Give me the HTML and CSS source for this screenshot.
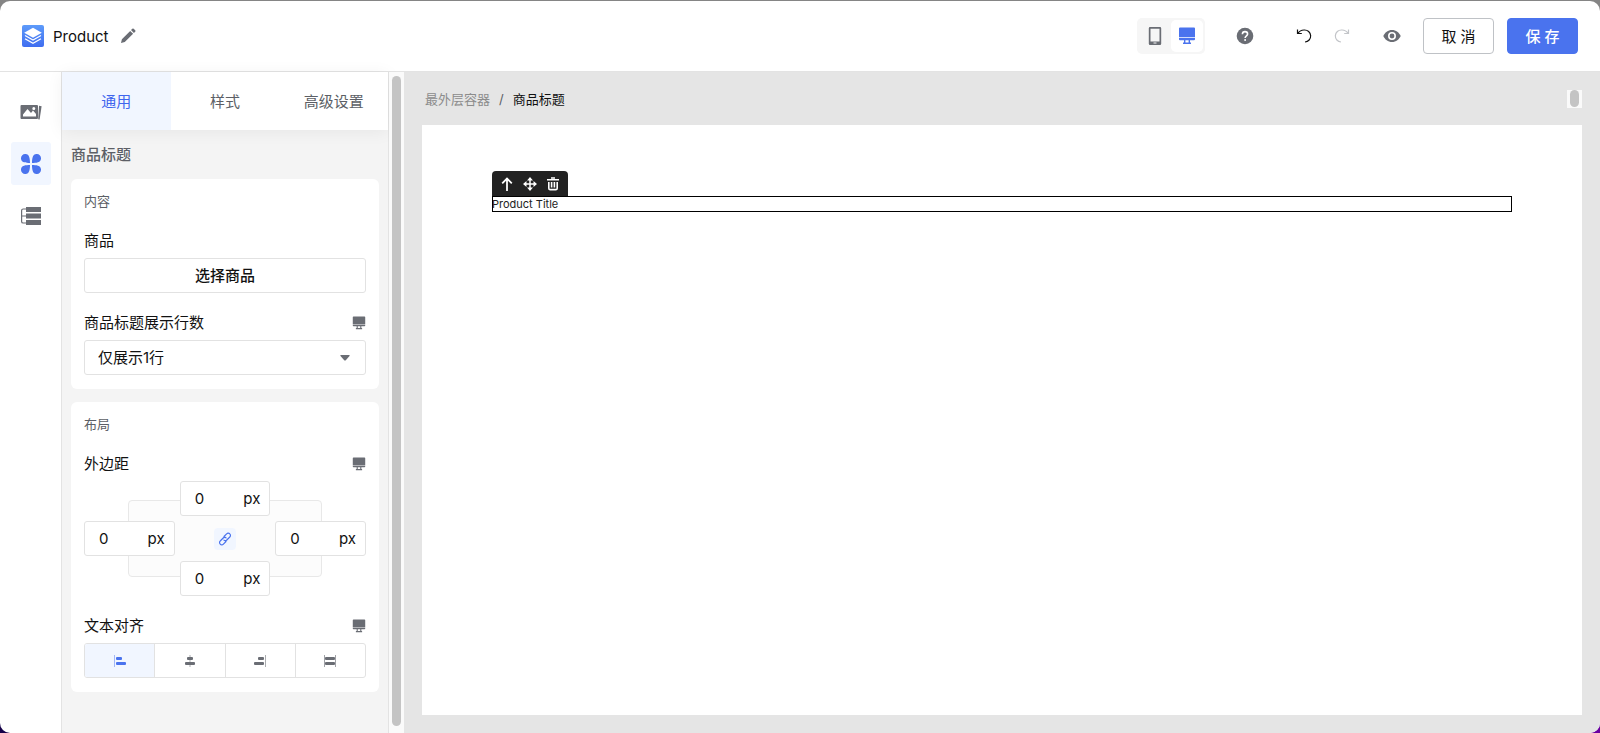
FILE: index.html
```html
<!DOCTYPE html>
<html lang="zh-CN">
<head>
    <meta charset="UTF-8">
    <meta name="viewport" content="width=device-width, initial-scale=1.0">
    <title>Product</title>
    <link rel="stylesheet" href="styles.css">
</head>
<body>
    <svg class="sprite" aria-hidden="true">
        <symbol id="monitor" viewBox="0 0 18 18">
            <path fill="currentColor" d="M2 .5h14a1 1 0 0 1 1 1v8.800H1V1.500a1 1 0 0 1 1-1z"/>
            <path fill="currentColor" fill-rule="evenodd" d="M1 11h16v1.300a1 1 0 0 1-1 1h-4v2.200h1V17H5v-1.500h1v-2.200H2a1 1 0 0 1-1-1zM7.400 13.300v2.200h3.200v-2.200z"/>
        </symbol>
    </svg>
    <div class="app">
        <header class="header">
            <div class="brand">
                <svg class="logo" width="22" height="22" viewBox="0 0 22 22">
                    <defs><linearGradient id="logo-bg" x1="0" y1="0" x2="0" y2="1"><stop offset="0" stop-color="#5d9bfa"/><stop offset="1" stop-color="#3f6df0"/></linearGradient></defs>
                    <rect width="22" height="22" rx="2" fill="url(#logo-bg)"/>
                    <path fill="#fff" d="M11 2.800l8.800 5L11 12.800 2.200 7.800z"/>
                    <path fill="none" stroke="#fff" stroke-width="1.300" d="M3 10.500l8 4.500 8-4.500M3 13.700l8 4.500 8-4.500"/>
                </svg>
                <span class="brand-name">Product</span>
                <button class="icon-btn edit" aria-label="编辑名称">
                    <svg width="16" height="16" viewBox="0 0 16 16"><path fill="currentColor" d="M1 15l.9-3.800 8.300-8.300 2.900 2.900-8.300 8.300zM11 2.100l1.300-1.300a1 1 0 0 1 1.400 0l1.500 1.500a1 1 0 0 1 0 1.400L13.900 5z"/></svg>
                </button>
            </div>
            <div class="tools">
                <div class="devices">
                    <button class="device" aria-label="手机">
                        <svg width="14" height="20" viewBox="0 0 14 20"><path fill="currentColor" fill-rule="evenodd" d="M2 1h10a1.200 1.200 0 0 1 1.200 1.200v15.600A1.200 1.200 0 0 1 12 19H2a1.200 1.200 0 0 1-1.200-1.200V2.200A1.200 1.200 0 0 1 2 1zm.5 1.800v12.600h9V2.800zM5.500 16.500v1h3v-1z"/></svg>
                    </button>
                    <button class="device active" aria-label="桌面">
                        <svg width="18" height="18"><use href="#monitor"/></svg>
                    </button>
                </div>
                <button class="icon-btn help" aria-label="帮助">
                    <svg width="18" height="18" viewBox="0 0 18 18"><circle cx="9" cy="9" r="8.300" fill="currentColor"/><path fill="none" stroke="#fff" stroke-width="1.600" d="M6.400 7.200C6.400 5.600 7.500 4.600 9 4.600s2.600 1 2.600 2.400c0 1.700-2.500 1.900-2.500 4"/><circle cx="9.100" cy="13.100" r="1" fill="#fff"/></svg>
                </button>
                <button class="icon-btn undo" aria-label="撤销">
                    <svg width="16" height="16" viewBox="0 0 16 16" fill="none" stroke="currentColor" stroke-width="1.200"><path d="M1.500 1.500v4h4.300M2 5.300C3.300 3.200 5.600 1.900 8.300 2a6 6 0 0 1 .7 12"/></svg>
                </button>
                <button class="icon-btn redo" aria-label="重做" disabled>
                    <svg width="16" height="16" viewBox="0 0 16 16" fill="none" stroke="currentColor" stroke-width="1.200"><path d="M14.500 1.500v4h-4.300M14 5.300C12.700 3.200 10.400 1.900 7.700 2A6 6 0 0 0 7 14"/></svg>
                </button>
                <button class="icon-btn preview" aria-label="预览">
                    <svg width="18" height="14" viewBox="0 0 18 14"><path fill="currentColor" d="M9 1c4 0 7.200 2.600 8.700 6-1.500 3.400-4.700 6-8.700 6S1.800 10.400.3 7C1.800 3.600 5 1 9 1z"/><circle cx="9" cy="7" r="3.200" fill="none" stroke="#fff" stroke-width="1.600"/></svg>
                </button>
                <button class="btn">取 消</button>
                <button class="btn primary">保 存</button>
            </div>
        </header>

        <div class="body">
            <nav class="rail">
                <button class="rail-item" aria-label="媒体">
                    <svg width="24" height="20" viewBox="0 0 24 20"><path fill="currentColor" fill-rule="evenodd" d="M2.500 3H18a1 1 0 0 1 1 1v12a1 1 0 0 1-1 1H2.500a1 1 0 0 1-1-1V4a1 1 0 0 1 1-1zM4 14.500h13v-2.500L14 8.500l-2 2.500-3.500-4L4 12.500zM14.800 5a1.500 1.500 0 1 0 0 3 1.500 1.500 0 0 0 0-3z"/><path fill="currentColor" d="M20 3.800l2.600.5-2 13.200-1.400-.3z"/></svg>
                </button>
                <button class="rail-item active" aria-label="组件">
                    <svg width="20" height="20" viewBox="0 0 20 20" fill="currentColor"><path id="petal" d="M9 9C5 9 0 8.500 0 4.500A4.300 4.300 0 0 1 4.500 0C8.500 0 9 5 9 9z"/><use href="#petal" transform="rotate(90 10 10)"/><use href="#petal" transform="rotate(180 10 10)"/><use href="#petal" transform="rotate(270 10 10)"/></svg>
                </button>
                <button class="rail-item" aria-label="图层">
                    <svg width="20" height="18" viewBox="0 0 20 18"><path fill="currentColor" d="M5 0h15v5H5zM5 6.500h15v5H5zM5 13h15v5H5z"/><path fill="none" stroke="currentColor" stroke-width="1.200" d="M5 2H2.200Q.6 2 .6 3.600v10.800Q.6 16 2.200 16H5M.6 9H5"/></svg>
                </button>
            </nav>

            <aside class="panel">
                <div class="tabs" role="tablist">
                    <button class="tab active" role="tab" aria-selected="true">通用</button>
                    <button class="tab" role="tab" aria-selected="false">样式</button>
                    <button class="tab" role="tab" aria-selected="false">高级设置</button>
                </div>
                <div class="panel-body">
                    <h2 class="panel-title">商品标题</h2>

                    <section class="card">
                        <h3 class="card-title">内容</h3>
                        <div class="field">
                            <div class="field-label">商品</div>
                            <button class="choose">选择商品</button>
                        </div>
                        <div class="field">
                            <div class="field-label">
                                <label for="lines">商品标题展示行数</label>
                                <svg width="14" height="14"><use href="#monitor"/></svg>
                            </div>
                            <div class="select-wrap">
                                <select id="lines" class="select"><option>仅展示1行</option></select>
                                <svg class="arrow" width="10" height="6" viewBox="0 0 10 6"><path fill="currentColor" d="M.8 0h8.400q.8.200.3.900L5.800 5.200Q5 6 4.200 5.200L.5.900Q0 .2.800 0z"/></svg>
                            </div>
                        </div>
                    </section>

                    <section class="card">
                        <h3 class="card-title">布局</h3>
                        <div class="field">
                            <div class="field-label">
                                外边距
                                <svg width="14" height="14"><use href="#monitor"/></svg>
                            </div>
                            <div class="spacing">
                                <div class="spacing-frame"></div>
                                <label class="unit top"><input type="text" value="0" aria-label="上边距"><span>px</span></label>
                                <label class="unit left"><input type="text" value="0" aria-label="左边距"><span>px</span></label>
                                <button class="link" aria-label="关联边距">
                                    <svg width="14" height="14" viewBox="0 0 14 14" fill="none" stroke="currentColor" stroke-width="1.200" stroke-linecap="round"><path d="M6 4.500l2.600-2.600a2.100 2.100 0 0 1 3.200 0 2.100 2.100 0 0 1 0 3.100L8.800 8a2.100 2.100 0 0 1-2.900.1M8 9.500l-2.600 2.600a2.100 2.100 0 0 1-3.200 0 2.100 2.100 0 0 1 0-3.100L5.200 6a2.100 2.100 0 0 1 2.900-.1"/></svg>
                                </button>
                                <label class="unit right"><input type="text" value="0" aria-label="右边距"><span>px</span></label>
                                <label class="unit bottom"><input type="text" value="0" aria-label="下边距"><span>px</span></label>
                            </div>
                        </div>
                        <div class="field">
                            <div class="field-label">
                                文本对齐
                                <svg width="14" height="14"><use href="#monitor"/></svg>
                            </div>
                            <div class="segments">
                                <button class="segment active" aria-label="左对齐">
                                    <svg width="12" height="12" viewBox="0 0 12 12" fill="currentColor"><path d="M0 0h.8v12H0z" opacity=".6"/><rect x="2" y="2" width="6" height="3" rx="1"/><rect x="2" y="7" width="10" height="3" rx="1"/></svg>
                                </button>
                                <button class="segment" aria-label="居中">
                                    <svg width="12" height="12" viewBox="0 0 12 12" fill="currentColor"><path d="M5.600 0h.8v12h-.8z" opacity=".7"/><rect x="3" y="2" width="6" height="3" rx="1"/><rect x="1" y="7" width="10" height="3" rx="1"/></svg>
                                </button>
                                <button class="segment" aria-label="右对齐">
                                    <svg width="12" height="12" viewBox="0 0 12 12" fill="currentColor"><path d="M11.200 0h.8v12h-.8z" opacity=".7"/><rect x="4" y="2" width="6" height="3" rx="1"/><rect x="0" y="7" width="10" height="3" rx="1"/></svg>
                                </button>
                                <button class="segment" aria-label="两端对齐">
                                    <svg width="12" height="12" viewBox="0 0 12 12" fill="currentColor"><path d="M0 0h.8v12H0zM11.200 0h.8v12h-.8z" opacity=".8"/><rect x="1" y="2" width="10" height="3" rx="1"/><rect x="1" y="7" width="10" height="3" rx="1"/></svg>
                                </button>
                            </div>
                        </div>
                    </section>
                </div>
            </aside>
            <div class="scrollbar"><div class="thumb"></div></div>

            <main class="stage">
                <div class="stage-bar">
                    <nav class="crumbs">
                        <a href="#">最外层容器</a>
                        <span class="slash">/</span>
                        <span class="current">商品标题</span>
                    </nav>
                    <div class="mini-scroll"><div class="thumb"></div></div>
                </div>
                <div class="canvas">
                    <div class="element-tools">
                        <button aria-label="选择父级"><svg width="14" height="14" viewBox="0 0 14 14" fill="none" stroke="currentColor" stroke-width="1.800"><path d="M7 14V1.500M2.200 6.300L7 1.500l4.800 4.800"/></svg></button>
                        <button aria-label="移动"><svg width="14" height="14" viewBox="0 0 14 14"><path stroke="currentColor" stroke-width="1.500" d="M7 2v10M2 7h10"/><path fill="currentColor" d="M7 0l3 3.500H4zM7 14l3-3.500H4zM0 7l3.500-3v6zM14 7l-3.500-3v6z"/></svg></button>
                        <button aria-label="删除"><svg width="14" height="14" viewBox="0 0 14 14" fill="none" stroke="currentColor" stroke-width="1.600"><path d="M1 2.800h12M5 1h4M2.800 5v6.200q0 1.400 1.400 1.400h5.600q1.400 0 1.400-1.400V5M5.600 5v5.500M8.400 5v5.500"/></svg></button>
                    </div>
                    <div class="element">Product Title</div>
                </div>
            </main>
        </div>
    </div>
</body>
</html>
```

FILE: styles.css
```css
* { box-sizing: border-box; }
body { margin: 0; height: 100vh; padding-top: 1px; overflow: hidden; background: linear-gradient(to right, #150048, #6a00a0); font-family: Inter, "Noto Sans CJK SC", sans-serif; font-size: 15px; color: #111; }
body::before { content: ""; position: absolute; z-index: -1; top: 0; left: 0; right: 0; height: 20px; background: #858585; }
button, input, select { margin: 0; padding: 0; border: 0; background: none; font: inherit; color: inherit; }
button { display: flex; align-items: center; justify-content: center; cursor: pointer; }
h2, h3 { margin: 0; }
svg { flex: none; display: block; }
.sprite { position: absolute; width: 0; height: 0; }

.app { display: flex; flex-direction: column; height: 100%; border-radius: 10px; overflow: hidden; background: #fff; }

/* header */
.header { display: flex; align-items: center; justify-content: space-between; height: 71px; padding: 0 22px; border-bottom: 1px solid #e3e3e3; flex: none; }
.brand { display: flex; align-items: center; }
.brand-name { margin: 0 11px 0 9px; }
.icon-btn { color: #6a6d74; }
.tools { display: flex; align-items: center; }
.devices { display: flex; align-items: center; height: 36px; padding: 2px; border-radius: 5px; background: #f6f6f6; margin-right: 31px; }
.device { width: 32px; height: 32px; border-radius: 5px; color: #6a6d74; }
.device.active { background: #fff; color: #4a73ee; }
.help { margin-right: 42px; }
.undo { margin-right: 22px; color: #111; }
.redo { margin-right: 33px; color: #c3c5c9; }
.preview { margin-right: 22px; }
.btn { width: 71px; height: 36px; padding-bottom: 2px; border: 1px solid #bfc2c6; border-radius: 4px; }
.btn.primary { margin-left: 13px; border-color: #4a73ee; background: #4a73ee; color: #fff; font-weight: 500; }

.body { display: flex; flex: 1; min-height: 0; }

/* left rail */
.rail { display: flex; flex-direction: column; align-items: center; gap: 9px; width: 62px; padding-top: 18px; border-right: 1px solid #e3e3e3; flex: none; }
.rail-item { width: 40px; height: 43px; border-radius: 3px; color: #6a6d74; }
.rail-item.active { background: #f1f6ff; color: #4a73ee; }

/* settings panel */
.panel { width: 327px; border-right: 1px solid #e3e3e3; background: #f4f4f4; flex: none; }
.tabs { display: flex; height: 58px; background: #fff; box-shadow: 0 2px 16px rgba(0, 0, 0, 0.06); }
.tab { flex: 1 1 0; padding-bottom: 2px; color: #5c5f66; }
.tab.active { background: #f1f6ff; color: #3f66ee; }
.panel-body { display: flex; flex-direction: column; gap: 13px; padding: 13px 9px; }
.panel-title { font-size: 15px; line-height: 23px; font-weight: 500; color: #5c5f66; }
.card { display: flex; flex-direction: column; gap: 19px; padding: 13px 13px 14px; border-radius: 6px; background: #fff; }
.card-title { font-size: 13px; line-height: 18px; padding-bottom: 1px; font-weight: 400; color: #5c5f66; }
.field { display: flex; flex-direction: column; gap: 6px; }
.field-label { display: flex; align-items: center; justify-content: space-between; height: 22px; line-height: 22px; }
.field-label svg { color: #6a6d74; }
.choose, .select, .unit { width: 100%; height: 35px; border: 1px solid #e2e2e2; border-radius: 3px; background: #fff; }
.choose { padding-bottom: 2px; font-weight: 500; }
.select-wrap { position: relative; }
.select { display: block; padding: 0 13px; appearance: none; }
.arrow { position: absolute; right: 16px; top: 15px; color: #6a6d74; pointer-events: none; }

/* margin editor */
.spacing { display: grid; grid-template-columns: repeat(3, 1fr); grid-template-rows: repeat(3, 35px); gap: 5px; }
.spacing-frame { grid-area: 1 / 1 / 4 / 4; margin: 19px 44px; border: 1px solid #e8e8e8; border-radius: 4px; background: #fcfcfc; }
.unit { display: flex; align-items: center; justify-content: space-between; padding: 0 9px 0 14px; }
.unit input { width: 36px; }
.top { grid-area: 1 / 2; }
.left { grid-area: 2 / 1; }
.right { grid-area: 2 / 3; }
.bottom { grid-area: 3 / 2; }
.link { grid-area: 2 / 2; place-self: center; width: 22px; height: 22px; border-radius: 4px; background: #f1f6ff; color: #4a73ee; }

.segments { display: flex; height: 35px; border: 1px solid #e2e2e2; border-radius: 3px; overflow: hidden; }
.segment { flex: 1; color: #6a6d74; }
.segment + .segment { border-left: 1px solid #e2e2e2; }
.segment.active { background: #f1f6ff; color: #4a73ee; }

.scrollbar { width: 15px; padding: 4px 2px 7px 3px; background: #fafafa; flex: none; }
.thumb { width: 9px; height: 100%; border-radius: 5px; background: #c4c4c4; }

/* stage */
.stage { display: flex; flex-direction: column; flex: 1; min-width: 0; padding: 18px 18px; background: #e5e5e5; }
.stage-bar { display: flex; align-items: center; justify-content: space-between; height: 18px; margin-bottom: 17px; padding-left: 3px; font-size: 13px; line-height: 18px; }
.crumbs { display: flex; gap: 9px; }
.crumbs a { color: #8c8c8c; text-decoration: none; }
.slash { color: #5c5f66; }
.mini-scroll { width: 15px; height: 18px; padding: 0 3px 1px; background: #fafafa; }
.canvas { flex: 1; padding: 46px 70px; background: #fff; }
.element-tools { display: flex; align-items: center; justify-content: space-around; width: 76px; height: 25px; padding: 0 4px; border-radius: 4px 4px 0 0; background: #222; color: #fff; }
.element { height: 16px; outline: 1px solid #000; outline-offset: -1px; font-size: 11px; line-height: 16px; color: #222; }
```
